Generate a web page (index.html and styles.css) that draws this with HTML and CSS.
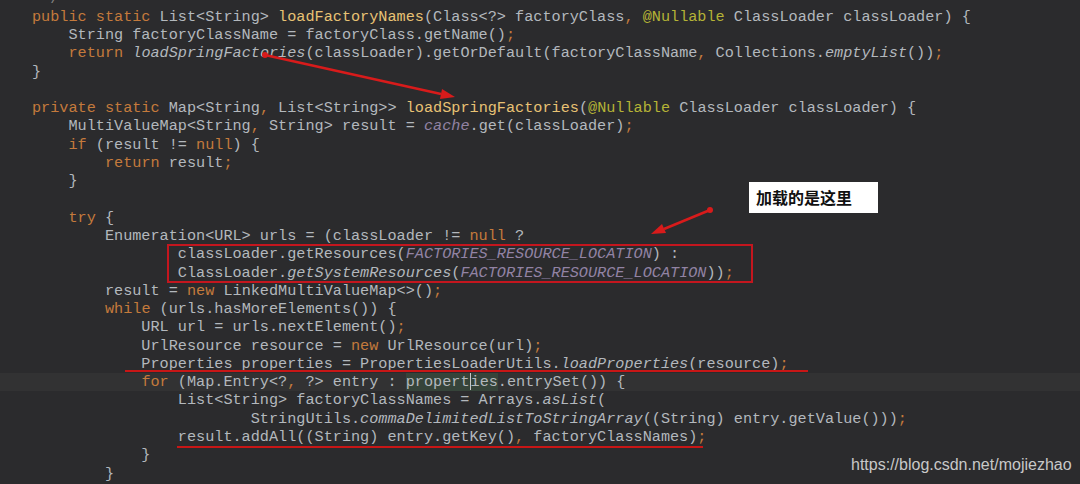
FILE: index.html
```html
<!DOCTYPE html>
<html lang="en">
<head>
    <meta charset="UTF-8">
    <title>loadSpringFactories</title>
    <link rel="stylesheet" href="styles.css">
</head>
<body>

    <div class="editor">
        <div class="code">
            <div class="line cut"><span class="cm"> */</span></div>
            <div class="line"><span class="k">public static</span> List&lt;String&gt; <span class="f">loadFactoryNames</span>(Class&lt;?&gt; factoryClass<span class="k">,</span> <span class="a">@Nullable</span> ClassLoader classLoader) {</div>
            <div class="line">    String factoryClassName = factoryClass.getName()<span class="k">;</span></div>
            <div class="line">    <span class="k">return</span> <span class="i">loadSpringFactories</span>(classLoader).getOrDefault(factoryClassName<span class="k">,</span> Collections.<span class="i">emptyList</span>())<span class="k">;</span></div>
            <div class="line">}</div>
            <div class="line"> </div>
            <div class="line"><span class="k">private static</span> Map&lt;String<span class="k">,</span> List&lt;String&gt;&gt; <span class="f">loadSpringFactories</span>(<span class="a">@Nullable</span> ClassLoader classLoader) {</div>
            <div class="line">    MultiValueMap&lt;String<span class="k">,</span> String&gt; result = <span class="c">cache</span>.get(classLoader)<span class="k">;</span></div>
            <div class="line">    <span class="k">if</span> (result != <span class="k">null</span>) {</div>
            <div class="line">        <span class="k">return</span> result<span class="k">;</span></div>
            <div class="line">    }</div>
            <div class="line"> </div>
            <div class="line">    <span class="k">try</span> {</div>
            <div class="line">        Enumeration&lt;URL&gt; urls = (classLoader != <span class="k">null</span> ?</div>
            <div class="line">                classLoader.getResources(<span class="c">FACTORIES_RESOURCE_LOCATION</span>) :</div>
            <div class="line">                ClassLoader.<span class="i">getSystemResources</span>(<span class="c">FACTORIES_RESOURCE_LOCATION</span>))<span class="k">;</span></div>
            <div class="line">        result = <span class="k">new</span> LinkedMultiValueMap&lt;&gt;()<span class="k">;</span></div>
            <div class="line">        <span class="k">while</span> (urls.hasMoreElements()) {</div>
            <div class="line">            URL url = urls.nextElement()<span class="k">;</span></div>
            <div class="line">            UrlResource resource = <span class="k">new</span> UrlResource(url)<span class="k">;</span></div>
            <div class="line">            Properties properties = PropertiesLoaderUtils.<span class="i">loadProperties</span>(resource)<span class="k">;</span></div>
            <div class="line current">            <span class="k">for</span> (Map.Entry&lt;?<span class="k">,</span> ?&gt; entry : <span class="hl">propert<span class="caret"></span>ies</span>.entrySet()) {</div>
            <div class="line">                List&lt;String&gt; factoryClassNames = Arrays.<span class="i">asList</span>(</div>
            <div class="line">                        StringUtils.<span class="i">commaDelimitedListToStringArray</span>((String) entry.getValue()))<span class="k">;</span></div>
            <div class="line">                result.addAll((String) entry.getKey()<span class="k">,</span> factoryClassNames)<span class="k">;</span></div>
            <div class="line">            }</div>
            <div class="line">        }</div>
        </div>

        <!-- hand drawn marks on top of the code -->
        <svg class="marks" width="1080" height="484" viewBox="0 0 1080 484">
            <g fill="#d81b1b" stroke="#d81b1b">
                <line x1="265" y1="55" x2="441" y2="94" stroke-width="2.5"/>
                <circle cx="265" cy="55" r="3" stroke="none"/>
                <polygon points="455,97 440,99 442,89" stroke="none"/>

                <line x1="710" y1="210" x2="664" y2="229" stroke-width="2.5"/>
                <circle cx="710" cy="210" r="3" stroke="none"/>
                <polygon points="651,234 662,224 666,233" stroke="none"/>
            </g>
            <rect x="168" y="245" width="584" height="37" fill="none" stroke="#c4161e" stroke-width="2"/>
            <line x1="125" y1="371" x2="808" y2="371" stroke="#c81616" stroke-width="2"/>
            <line x1="177" y1="447" x2="703" y2="447" stroke="#c81616" stroke-width="2"/>
        </svg>

        <div class="label">加载的是这里</div>
        <div class="watermark">https://blog.csdn.net/mojiezhao</div>
    </div>

</body>
</html>
```

FILE: styles.css
```css
body {
    margin: 0;
    padding: 0;
    background-color: #2b2b2d;
}

.editor {
    position: relative;
    width: 1080px;
    height: 484px;
    overflow: hidden;
    background-color: #2b2b2d;
}

.code {
    margin-top: -10.4px;
    font-family: "Liberation Mono", monospace;
    font-size: 15.2px;
    color: #b3b8bd;
}

.line {
    height: 18.28px;
    line-height: 18.28px;
    padding-left: 32px;
    white-space: pre;
}

.line.current {
    background-color: #323233;
}

/* syntax colours */
.k {
    color: #c47a3c;
}

.f {
    color: #e8c274;
}

.a {
    color: #b5b336;
}

.i {
    font-style: italic;
}

.c {
    font-style: italic;
    color: #9283a4;
}

.cm {
    color: #808080;
}

.hl {
    position: relative;
    background-color: #36443a;
}

.caret {
    display: inline-block;
    width: 0;
    height: 17px;
    vertical-align: -4px;
    border-left: 1px solid #c8c8c8;
}

.marks {
    position: absolute;
    top: 0;
    left: 0;
}

.label {
    position: absolute;
    left: 749px;
    top: 182px;
    width: 122px;
    height: 31px;
    padding-left: 7px;
    background: #fff;
    color: #111;
    font-family: "Noto Sans CJK SC", sans-serif;
    font-weight: bold;
    font-size: 16px;
    line-height: 31px;
}

.watermark {
    position: absolute;
    left: 851px;
    top: 456px;
    font-family: "Liberation Sans", Arial, sans-serif;
    font-size: 16px;
    line-height: 18px;
    color: #c8c8c8;
}
```
